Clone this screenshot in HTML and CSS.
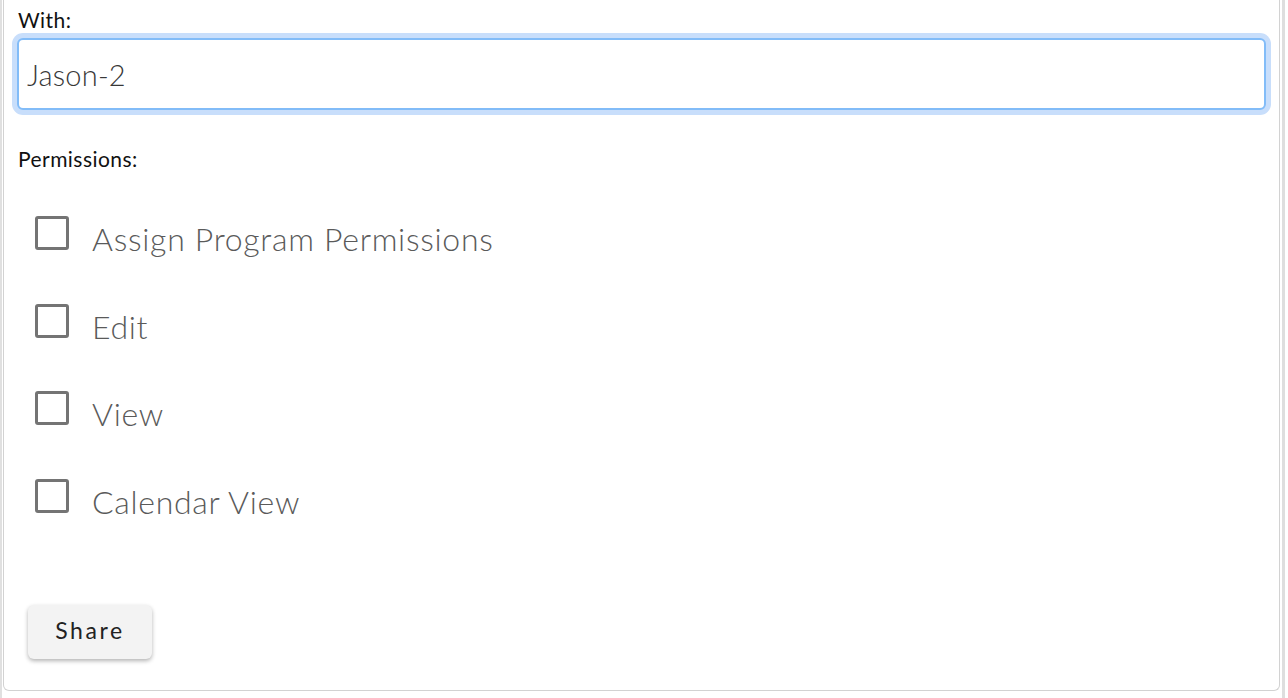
FILE: index.html
```html
<!DOCTYPE html>
<html lang="en">
<head>
<meta charset="utf-8">
<title>Share</title>
<link rel="stylesheet" href="styles.css">
</head>
<body>
<div class="frame">
  <div class="card">
    <label class="field-label" for="with">With:</label>
    <input id="with" class="text-input" type="text" value="Jason-2">
    <div class="field-label perm-title">Permissions:</div>
    <div class="perm-list">
      <label class="perm-row"><span class="box"></span><span class="perm-text">Assign Program Permissions</span></label>
      <label class="perm-row"><span class="box"></span><span class="perm-text">Edit</span></label>
      <label class="perm-row"><span class="box"></span><span class="perm-text">View</span></label>
      <label class="perm-row"><span class="box"></span><span class="perm-text">Calendar View</span></label>
    </div>
    <button class="share-btn" type="button">Share</button>
  </div>
</div>
</body>
</html>
```

FILE: styles.css
```css
html, body {
  margin: 0;
  padding: 0;
  background: #ffffff;
}

body {
  font-family: Lato, "Open Sans", sans-serif;
  width: 1288px;
  height: 698px;
  overflow: hidden;
}

.frame {
  width: 1280px;
  height: 698px;
  border-left: 2px solid #e0e0e0;
  border-right: 3px solid #dedede;
  display: flex;
  flex-direction: column;
}

.card {
  margin-left: 1px;
  width: 1277px;
  height: 691px;
  box-sizing: border-box;
  border: 1px solid #d2d2d2;
  border-top: none;
  border-radius: 0 0 6px 6px;
  padding: 8px 14px 0 14px;
  display: flex;
  flex-direction: column;
  align-items: flex-start;
}

.field-label {
  display: block;
  font-size: 21px;
  line-height: 24px;
  letter-spacing: 0.45px;
  color: #111111;
}

.text-input {
  margin: 6px 0 0 -1px;
  width: 1249px;
  height: 72px;
  box-sizing: border-box;
  border: 2px solid #82bcf8;
  border-radius: 6px;
  box-shadow: 0 0 0 5px #c8defb;
  padding: 0 8px;
  font-family: Lato, "Open Sans", sans-serif;
  font-weight: 300;
  font-size: 29px;
  letter-spacing: 0.2px;
  color: #383838;
  outline: none;
  background: #ffffff;
}

.perm-title {
  margin-top: 37px;
}

.perm-list {
  margin-top: 45px;
  margin-left: 17px;
  display: flex;
  flex-direction: column;
  gap: 53.7px;
}

.perm-row {
  display: flex;
  align-items: center;
  height: 34px;
}

.box {
  width: 34px;
  height: 34px;
  box-sizing: border-box;
  border: 3px solid #747474;
  border-radius: 3px;
  flex: none;
}

.perm-text {
  margin-left: 23px;
  font-size: 32px;
  font-weight: 300;
  letter-spacing: 0.7px;
  line-height: 34px;
  padding-top: 12px;
  color: #5a5a5a;
}

.share-btn {
  margin: 92px 0 0 10px;
  width: 124px;
  height: 54px;
  border: none;
  border-radius: 6px;
  background: #f3f3f3;
  box-shadow: 0 2px 4px rgba(0, 0, 0, 0.3);
  font-family: Lato, "Open Sans", sans-serif;
  font-size: 23px;
  letter-spacing: 2.6px;
  color: #222222;
  padding: 0 0 4px 0;
}
```
